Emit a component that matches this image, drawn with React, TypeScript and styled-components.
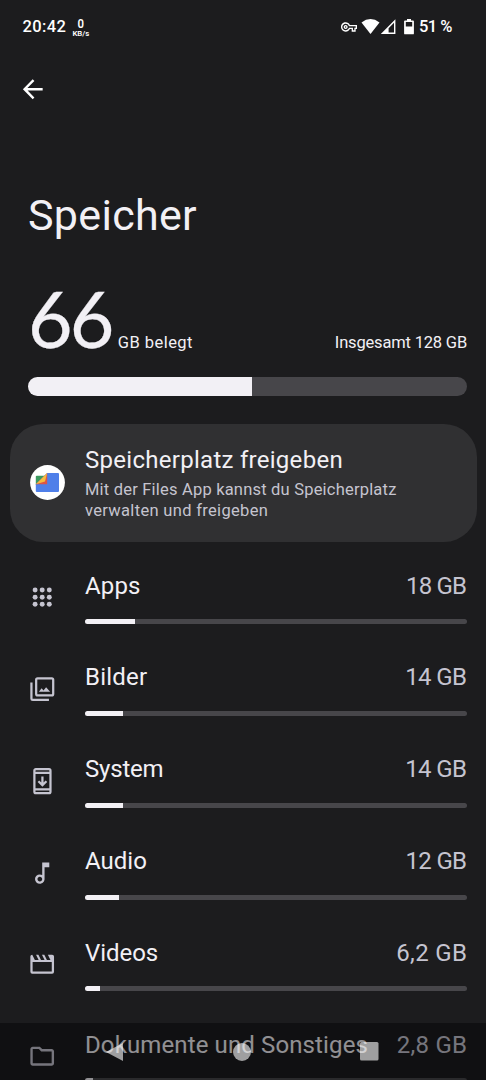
import React from "react";
import styled, { createGlobalStyle } from "styled-components";
import { MdOutlineFolder, MdOutlineMusicNote, MdOutlineVpnKey } from "react-icons/md";

const GlobalStyle = createGlobalStyle`
  * { box-sizing: border-box; }
  body { margin: 0; background: #1c1c1e; overflow: hidden; }
`;

const Screen = styled.div`
  position: relative;
  width: 486px;
  height: 1080px;
  overflow: hidden;
  background: #1c1c1e;
  color: #f2f0f5;
  font-family: Roboto, "Liberation Sans", sans-serif;
`;

const StatusBar = styled.header`
  height: 54px;
  padding: 0 34px 0 22.5px;
  display: flex;
  align-items: center;
  justify-content: space-between;
  color: #fff;
`;

const StatusGroup = styled.div`
  display: flex;
  align-items: center;
`;

const StatusText = styled.span<{ $spacing: number }>`
  font: 500 16.5px/20px Roboto, sans-serif;
  letter-spacing: ${(p) => p.$spacing}px;
  white-space: nowrap;
`;

const NetSpeed = styled.div`
  margin-left: 6px;
  display: flex;
  flex-direction: column;
  align-items: center;
  font-family: Roboto, sans-serif;
`;

const NetValue = styled.span`
  font-size: 13.5px;
  font-weight: 600;
  line-height: 13px;
  transform: scaleX(0.84);
`;

const NetUnit = styled.span`
  font-size: 7.8px;
  font-weight: 600;
  line-height: 7px;
`;

const AppBar = styled.nav`
  height: 70px;
  padding: 0 19px;
  display: flex;
  align-items: center;
`;

const Title = styled.h1`
  margin: 65px 0 0 28px;
  font-size: 43px;
  line-height: 52px;
  font-weight: 400;
  letter-spacing: 0.3px;
`;

const Summary = styled.section`
  margin: 44px 19px 0 28px;
`;

const SummaryLine = styled.div`
  height: 66px;
  margin-bottom: 25.5px;
  display: flex;
  align-items: baseline;
`;

const UsedNumber = styled.span`
  font: 400 77px/66px Lato, sans-serif;
  letter-spacing: -2.8px;
  -webkit-text-stroke: 0.3px #f2f0f5;
`;

const SmallLabel = styled.span<{ $end?: boolean }>`
  margin-left: ${(p) => (p.$end ? "auto" : "6px")};
  font-size: 16.5px;
  line-height: 20px;
  letter-spacing: ${(p) => (p.$end ? -0.18 : 0.46)}px;
`;

const Track = styled.div<{ $h: number }>`
  height: ${(p) => p.$h}px;
  border-radius: ${(p) => p.$h / 2}px;
  background: #47464a;
  overflow: hidden;
`;

const Fill = styled.div`
  height: 100%;
  background: #f2f0f5;
`;

const Card = styled.section`
  margin: 28px 9.5px 0;
  height: 118.5px;
  border-radius: 33px;
  background: #303032;
  display: flex;
  align-items: center;
`;

const CardIcon = styled.div`
  width: 75.5px;
  padding-left: 20px;
  display: flex;
`;

const CardTitle = styled.div`
  font-size: 24px;
  line-height: 30px;
  letter-spacing: 0.28px;
`;

const CardText = styled.div`
  margin-top: 3.5px;
  font-size: 16.5px;
  line-height: 21px;
  color: #c5c4cf;
`;

const CardLine = styled.div<{ $spacing: number }>`
  letter-spacing: ${(p) => p.$spacing}px;
`;

const List = styled.main`
  margin-top: 9.5px;
`;

const Row = styled.div`
  height: 91.8px;
  padding-right: 19px;
  display: flex;
  align-items: center;
`;

const RowIcon = styled.div`
  width: 85px;
  padding-left: 28px;
  display: flex;
  color: #c5c4d0;
`;

const RowBody = styled.div`
  flex: 1;
`;

const RowHead = styled.div`
  margin-bottom: 18.5px;
  display: flex;
  justify-content: space-between;
  font-size: 24px;
  line-height: 30px;
`;

const RowLabel = styled.span<{ $spacing: number }>`
  letter-spacing: ${(p) => p.$spacing}px;
`;

const RowSize = styled.span<{ $spacing: number }>`
  color: #c5c4d0;
  letter-spacing: ${(p) => p.$spacing}px;
  margin-right: ${(p) => -p.$spacing}px;
`;

const NavBar = styled.footer`
  position: absolute;
  left: 0;
  right: 0;
  bottom: 0;
  height: 57px;
  padding: 0 106px;
  display: flex;
  align-items: center;
  justify-content: space-between;
  background: rgba(0, 0, 0, 0.4);
`;

const AppsIcon = () => (
  <svg width="28.4" height="28.4" viewBox="0 0 24 24" fill="currentColor">
    {[6, 12, 18].map((y) => [6, 12, 18].map((x) => <circle key={`${x}-${y}`} cx={x} cy={y} r="2.1" />))}
  </svg>
);

const PhotosIcon = () => (
  <svg width="28.4" height="28.4" viewBox="0 0 24 24" fill="none" stroke="currentColor" strokeWidth="1.9">
    <rect x="6.9" y="2.8" width="14.4" height="14.4" rx="1.2" />
    <path d="M2.9 6.3V20q0 1.1 1.1 1.1H17.7" />
    <path d="M9.2 14.2l2.3-3 1.6 2 2.2-2.9 3.4 3.9z" fill="currentColor" stroke="none" />
  </svg>
);

const SystemIcon = () => (
  <svg width="28.4" height="28.4" viewBox="0 0 24 24" fill="none" stroke="currentColor" strokeWidth="1.9">
    <rect x="5.4" y="1.9" width="13.6" height="20.2" rx="1.2" />
    <path d="M5.4 5h13.6M5.4 19h13.6M12.2 8v7M8.8 12l3.4 3.3 3.4-3.3" />
  </svg>
);

const MovieIcon = () => (
  <svg width="28.4" height="28.4" viewBox="0 0 24 24" fill="currentColor" fillRule="evenodd">
    <path d="M3.6 4L5.8 8.4H9L6.8 4H8.8L11 8.4H14L11.8 4H13.8L16 8.4H19L16.8 4H20.4Q22 4 22 5.6V18.4Q22 20 20.4 20H3.6Q2 20 2 18.4V5.6Q2 4 3.6 4ZM3.9 10.1V18.1H20.1V10.1Z" />
  </svg>
);

const FilesLogo = () => (
  <svg width="35" height="35" viewBox="0 0 35 35">
    <circle cx="17.5" cy="17.5" r="17.4" fill="#fff" />
    <path d="M5.8 11.8q0-1 1-1H15v9H5.8z" fill="#3c9a5f" />
    <path d="M17.2 8H28q1 0 1 1v17q0 1-1 1H6.8q-1 0-1-1v-6.7z" fill="#4f7fe9" />
    <path d="M17.2 8v11.3H5.8z" fill="#de5545" />
    <path d="M17.2 8L5.8 19.3 15 16.6z" fill="#f5bd41" />
  </svg>
);

const rows = [
  { label: "Apps", size: "18 GB", used: 13, icon: <AppsIcon />, labelSpacing: 0.15, sizeSpacing: -0.8 },
  { label: "Bilder", size: "14 GB", used: 10, icon: <PhotosIcon />, labelSpacing: 0.2, sizeSpacing: -0.6 },
  { label: "System", size: "14 GB", used: 10, icon: <SystemIcon />, labelSpacing: -0.2, sizeSpacing: -0.6 },
  { label: "Audio", size: "12 GB", used: 9, icon: <MdOutlineMusicNote size={28.4} />, labelSpacing: 0, sizeSpacing: -0.7 },
  { label: "Videos", size: "6,2 GB", used: 4, icon: <MovieIcon />, labelSpacing: -0.05, sizeSpacing: 0.35 },
  { label: "Dokumente und Sonstiges", size: "2,8 GB", used: 2, icon: <MdOutlineFolder size={28.4} />, labelSpacing: 0.12, sizeSpacing: 0.25 },
];

export default function App() {
  return (
    <Screen>
      <GlobalStyle />
      <StatusBar>
        <StatusGroup>
          <StatusText $spacing={0.4}>20:42</StatusText>
          <NetSpeed>
            <NetValue>0</NetValue>
            <NetUnit>KB/s</NetUnit>
          </NetSpeed>
        </StatusGroup>
        <StatusGroup>
          <MdOutlineVpnKey size={16} />
          <svg width="62" height="20" viewBox="0 0 62 20" fill="#fff">
            <path d="M4.5 5.4Q13.5-1.2 22.5 5.4L13.5 17z" />
            <path d="M38.4 2.3V16.9H23.8zM37 5.8L31.6 11.2V15.5H37z" fillRule="evenodd" />
            <path d="M48 3.4h2V2h4v1.4h2q.9 0 .9.9v12.1q0 .9-.9.9h-8q-.9 0-.9-.9V4.3q0-.9.9-.9zM48.8 5.1v4.3h6.4V5.1z" fillRule="evenodd" />
          </svg>
          <StatusText $spacing={-0.5}>51 %</StatusText>
        </StatusGroup>
      </StatusBar>
      <AppBar>
        <svg width="28.4" height="28.4" viewBox="0 0 24 24" fill="none" stroke="#fff" strokeWidth="2">
          <path d="M20 12H5M12.3 4.3L4.7 12l7.6 7.7" />
        </svg>
      </AppBar>
      <Title>Speicher</Title>
      <Summary>
        <SummaryLine>
          <UsedNumber>66</UsedNumber>
          <SmallLabel>GB belegt</SmallLabel>
          <SmallLabel $end>Insgesamt 128 GB</SmallLabel>
        </SummaryLine>
        <Track $h={19}>
          <Fill style={{ width: "51%" }} />
        </Track>
      </Summary>
      <Card>
        <CardIcon>
          <FilesLogo />
        </CardIcon>
        <div>
          <CardTitle>Speicherplatz freigeben</CardTitle>
          <CardText>
            <CardLine $spacing={0.2}>Mit der Files App kannst du Speicherplatz</CardLine>
            <CardLine $spacing={0.32}>verwalten und freigeben</CardLine>
          </CardText>
        </div>
      </Card>
      <List>
        {rows.map((r) => (
          <Row key={r.label}>
            <RowIcon>{r.icon}</RowIcon>
            <RowBody>
              <RowHead>
                <RowLabel $spacing={r.labelSpacing}>{r.label}</RowLabel>
                <RowSize $spacing={r.sizeSpacing}>{r.size}</RowSize>
              </RowHead>
              <Track $h={5}>
                <Fill style={{ width: `${r.used}%` }} />
              </Track>
            </RowBody>
          </Row>
        ))}
      </List>
      <NavBar>
        <svg width="18" height="20" viewBox="0 0 18 20">
          <path d="M0 10L17 1v18z" fill="rgba(255,255,255,.6)" />
        </svg>
        <svg width="18" height="18" viewBox="0 0 18 18">
          <circle cx="9" cy="9" r="9" fill="rgba(255,255,255,.6)" />
        </svg>
        <svg width="20" height="19" viewBox="0 0 20 19">
          <rect width="18.5" height="18.5" rx="1.5" fill="rgba(255,255,255,.6)" />
        </svg>
      </NavBar>
    </Screen>
  );
}
